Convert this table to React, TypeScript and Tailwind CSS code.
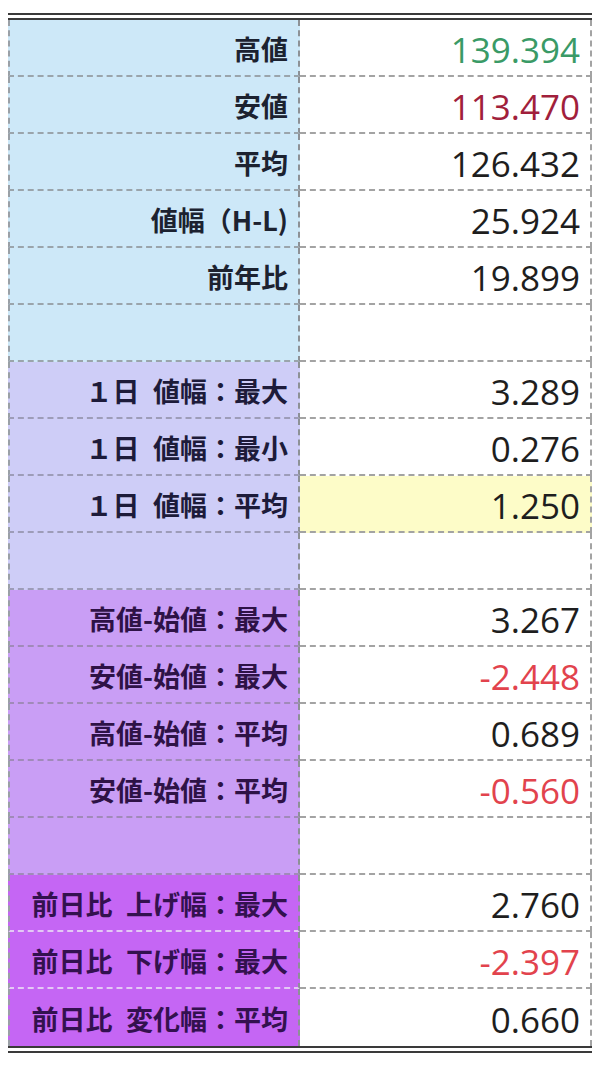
type Row = {
  label: string;
  value?: string;
  tone?: "green" | "darkred" | "red";
  hi?: boolean;
};

type Group = { bg: string; ink: string; line: string; rows: Row[] };

const groups: Group[] = [
  {
    bg: "bg-[#cde8f8]",
    ink: "text-[#1c2230]",
    line: "border-[#9aa4ab]",
    rows: [
      { label: "高値", value: "139.394", tone: "green" },
      { label: "安値", value: "113.470", tone: "darkred" },
      { label: "平均", value: "126.432" },
      { label: "値幅（H-L)", value: "25.924" },
      { label: "前年比", value: "19.899" },
      { label: "" },
    ],
  },
  {
    bg: "bg-[#cecdf7]",
    ink: "text-[#1d1b3a]",
    line: "border-[#9d9cb8]",
    rows: [
      { label: "１日\u2002値幅：最大", value: "3.289" },
      { label: "１日\u2002値幅：最小", value: "0.276" },
      { label: "１日\u2002値幅：平均", value: "1.250", hi: true },
      { label: "" },
    ],
  },
  {
    bg: "bg-[#c99ef5]",
    ink: "text-[#2e1246]",
    line: "border-[#a08ab8]",
    rows: [
      { label: "高値-始値：最大", value: "3.267" },
      { label: "安値-始値：最大", value: "-2.448", tone: "red" },
      { label: "高値-始値：平均", value: "0.689" },
      { label: "安値-始値：平均", value: "-0.560", tone: "red" },
      { label: "" },
    ],
  },
  {
    bg: "bg-[#c566f4]",
    ink: "text-[#33114f]",
    line: "border-[#e4c8f5]",
    rows: [
      { label: "前日比\u2002上げ幅：最大", value: "2.760" },
      { label: "前日比\u2002下げ幅：最大", value: "-2.397", tone: "red" },
      { label: "前日比\u2002変化幅：平均", value: "0.660" },
    ],
  },
];

const toneClass = {
  green: "text-[#3a9a66]",
  darkred: "text-[#a11f3c]",
  red: "text-[#e2434d]",
};

export default function App() {
  return (
    <div className="w-[600px] h-[1065px] bg-white pt-[13px] px-[8px]">
      <div className="border-t-[7px] border-b-[7px] border-double border-[#3a3a3a]">
        {groups.map((g, gi) =>
          g.rows.map((r, ri) => {
            const last = gi === groups.length - 1 && ri === g.rows.length - 1;
            return (
              <div key={`${gi}-${ri}`} className="grid grid-cols-[292px_1fr] grid-rows-[57px] h-[57px] overflow-hidden">
                <div
                  className={`${g.bg} ${g.ink} ${last ? "" : `border-b-2 border-dashed ${g.line}`} border-l-2 border-dashed border-l-[#9aa0a6] border-r-2 border-r-[#8d9196] flex items-center justify-end pr-[10px] pt-[2px] leading-none font-bold text-[27px] font-['Noto_Sans_CJK_JP','Noto_Sans_CJK_SC',sans-serif]`}
                >
                  {r.label}
                </div>
                <div
                  className={`${r.hi ? "bg-[#fdfcc8]" : "bg-white"} ${last ? "" : "border-b-2 border-dashed border-[#a3a3a3]"} border-r-2 border-dashed border-r-[#a3a3a3] flex items-center justify-end pr-[10px] pt-[4px] leading-none text-[35px] font-['Open_Sans','Noto_Sans',sans-serif] ${r.tone ? toneClass[r.tone] : "text-[#1e1e1e]"}`}
                >
                  {r.value}
                </div>
              </div>
            );
          })
        )}
      </div>
    </div>
  );
}
